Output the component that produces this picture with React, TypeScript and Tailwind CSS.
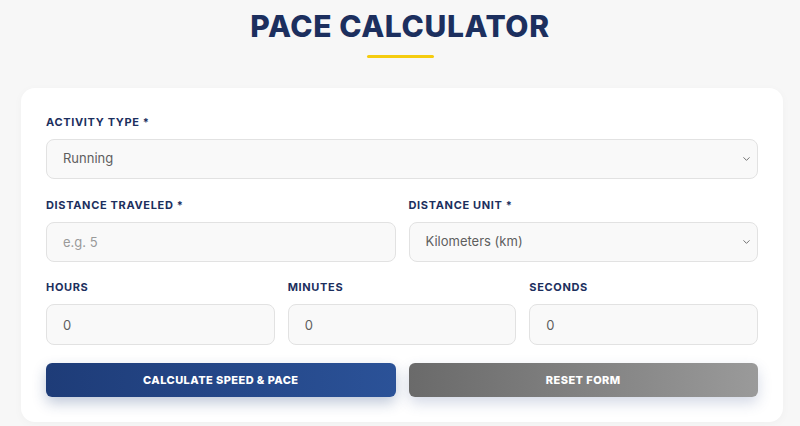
import { ChevronDown } from 'lucide-react';

const font = { fontFamily: 'Inter, "Liberation Sans", sans-serif' };

const Label = ({ text }: { text: string }) => (
    <label className="block text-[11px] font-bold tracking-[0.06em] text-[#1c2f5e] uppercase leading-4 mb-[9px]">
        {text}
    </label>
);

const inputCls =
    'w-full h-[40px] rounded-lg border border-[#e2e2e2] bg-[#f9f9f9] px-[16px] text-[13px] text-[#5e5e5e] placeholder:text-[#9a9a9a] outline-none';

const Select = ({ value }: { value: string }) => (
    <div className="relative">
        <select className={`${inputCls} appearance-none`} defaultValue={value}>
            <option>{value}</option>
        </select>
        <ChevronDown size={11} strokeWidth={2} className="absolute right-[6px] top-1/2 -translate-y-1/2 text-[#666] pointer-events-none" />
    </div>
);

const App = () => {
    return (
        <div className="min-h-[426px] bg-[#f7f7f7] pt-[8px]" style={font}>
            {/* Titulo */}
            <div className="flex flex-col items-center">
                <h1 className="text-[30px] font-extrabold tracking-[0.02em] text-[#1c2f5e] leading-[36px]">PACE CALCULATOR</h1>
                <div className="w-[67px] h-[3px] bg-[#f5cc0f] rounded-full mt-[11px]"></div>
            </div>

            {/* Card */}
            <div className="ml-[21px] w-[762px] mt-[30px] bg-white rounded-[14px] shadow-[0_2px_10px_rgba(0,0,0,0.03)] px-[25px] pt-[26px] pb-[25px]">
                <div className="mb-[18px]">
                    <Label text="Activity Type *" />
                    <Select value="Running" />
                </div>

                <div className="grid grid-cols-2 gap-x-[13px] mb-[17px]">
                    <div>
                        <Label text="Distance Traveled *" />
                        <input className={inputCls} placeholder="e.g. 5" />
                    </div>
                    <div>
                        <Label text="Distance Unit *" />
                        <Select value="Kilometers (km)" />
                    </div>
                </div>

                <div className="grid grid-cols-3 gap-x-[13px] mb-[18px]">
                    <div>
                        <Label text="Hours" />
                        <input className={`${inputCls} h-[41px]`} defaultValue="0" />
                    </div>
                    <div>
                        <Label text="Minutes" />
                        <input className={`${inputCls} h-[41px]`} defaultValue="0" />
                    </div>
                    <div>
                        <Label text="Seconds" />
                        <input className={`${inputCls} h-[41px]`} defaultValue="0" />
                    </div>
                </div>

                <div className="grid grid-cols-2 gap-x-[13px]">
                    <button className="h-[34px] rounded-md bg-gradient-to-r from-[#1e3c78] to-[#2b5298] text-white text-[11px] font-extrabold tracking-[0.04em] uppercase shadow-[0_6px_14px_rgba(30,60,120,0.28)]">
                        Calculate Speed &amp; Pace
                    </button>
                    <button className="h-[34px] rounded-md bg-gradient-to-r from-[#6a6a6a] to-[#9a9a9a] text-white text-[11px] font-extrabold tracking-[0.04em] uppercase shadow-[0_6px_14px_rgba(60,80,140,0.22)]">
                        Reset Form
                    </button>
                </div>
            </div>
        </div>
    );
};

export default App;
